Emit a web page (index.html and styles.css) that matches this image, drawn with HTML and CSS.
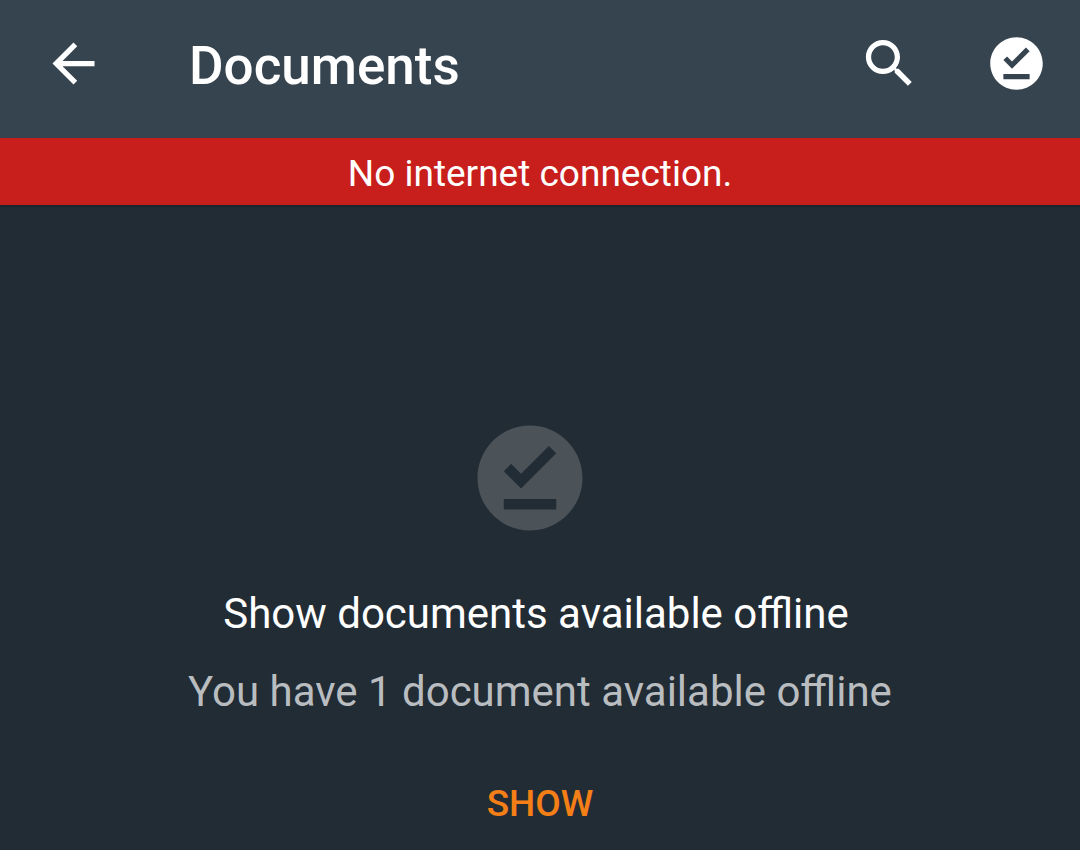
FILE: index.html
```html
<!DOCTYPE html>
<html lang="en">
<head>
<meta charset="utf-8">
<meta name="viewport" content="width=device-width, initial-scale=1">
<title>Documents</title>
<link rel="stylesheet" href="styles.css">
</head>
<body>
<header class="app-bar">
  <button class="icon-button" type="button" aria-label="Back">
    <svg class="icon" viewBox="0 0 24 24" aria-hidden="true"><path d="M20 11H7.83l5.59-5.59L12 4l-8 8 8 8 1.41-1.41L7.83 13H20v-2z"/></svg>
  </button>
  <h1 class="app-title">Documents</h1>
  <div class="actions">
    <button class="icon-button" type="button" aria-label="Search">
      <svg class="icon" viewBox="0 0 24 24" aria-hidden="true"><path d="M15.5 14h-.79l-.28-.27C15.41 12.59 16 11.11 16 9.5 16 5.91 13.09 3 9.5 3S3 5.91 3 9.5 5.91 16 9.5 16c1.61 0 3.09-.59 4.23-1.57l.27.28v.79l5 4.99L20.49 19l-4.99-5zm-6 0C7.01 14 5 11.99 5 9.5S7.01 5 9.5 5 14 7.01 14 9.5 11.99 14 9.5 14z"/></svg>
    </button>
    <button class="icon-button" type="button" aria-label="Available offline">
      <svg class="icon" viewBox="0 0 24 24" aria-hidden="true"><path d="M12 2C6.5 2 2 6.5 2 12s4.5 10 10 10 10-4.5 10-10S17.5 2 12 2zm5 16H7v-2h10v2zm-6.7-4L7 10.7l1.4-1.4 1.9 1.9 5.3-5.3L17 7.3 10.3 14z"/></svg>
    </button>
  </div>
</header>
<div class="banner" role="status">No internet connection.</div>
<main class="empty-state">
  <svg class="empty-icon" viewBox="0 0 24 24" aria-hidden="true"><path d="M12 2C6.5 2 2 6.5 2 12s4.5 10 10 10 10-4.5 10-10S17.5 2 12 2zm5 16H7v-2h10v2zm-6.7-4L7 10.7l1.4-1.4 1.9 1.9 5.3-5.3L17 7.3 10.3 14z"/></svg>
  <h2 class="empty-title">Show documents available offline</h2>
  <p class="empty-text">You have 1 document available offline</p>
  <button class="show-button" type="button">SHOW</button>
</main>
</body>
</html>
```
FILE: styles.css
```css
* {
  box-sizing: border-box;
}

body {
  display: flex;
  flex-direction: column;
  min-height: 100vh;
  margin: 0;
  background: #222c35;
  color: #fff;
  font-family: Roboto, "Noto Sans", sans-serif;
}

button {
  padding: 0;
  border: 0;
  background: none;
  color: inherit;
  font: inherit;
  cursor: pointer;
}

.app-bar {
  display: flex;
  align-items: flex-start;
  padding: 32px 32px 40px 42px;
  background: #364450;
}

.icon-button,
.icon {
  display: block;
  width: 63px;
  height: 63px;
}

.icon {
  fill: currentColor;
}

.app-title {
  flex: 1;
  margin: 0 0 0 84px;
  padding-top: 3px;
  font-size: 53px;
  line-height: 63px;
  font-weight: 500;
}

.actions {
  display: flex;
  gap: 64px;
}

.banner {
  padding: 14px 16px 9px;
  background: #c81e1c;
  font-size: 37px;
  line-height: 44px;
  text-align: center;
  box-shadow: 0 1px 2px rgba(0, 0, 0, 0.3);
}

.empty-state {
  display: flex;
  flex: 1;
  flex-direction: column;
  align-items: center;
  padding: 210px 16px 16px;
  text-align: center;
}

.empty-icon {
  width: 126px;
  height: 126px;
  margin-right: 20px;
  fill: #4b5359;
}

.empty-title,
.empty-text {
  margin: 0;
  font-size: 42px;
  line-height: 50px;
  font-weight: 400;
}

.empty-title {
  margin-top: 48px;
  padding-right: 8px;
}

.empty-text {
  margin-top: 28px;
  color: #b9bdc0;
}

.show-button {
  margin-top: 65px;
  color: #f57f17;
  font-size: 37px;
  line-height: 44px;
  font-weight: 500;
}
```
